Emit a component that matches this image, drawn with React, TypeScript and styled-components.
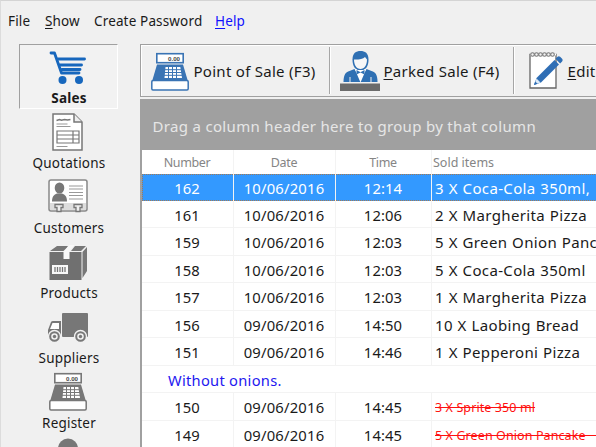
import React from 'react';
import styled, { createGlobalStyle, css } from 'styled-components';

const Global = createGlobalStyle`
  html, body { margin: 0; padding: 0; }
  body {
    overflow: hidden;
    background: #f0f0f0;
    color: #1a1a1a;
    font-family: 'Noto Sans', 'Open Sans', sans-serif;
  }
  svg { display: block; }
`;

const Window = styled.div`
  box-sizing: border-box;
  width: 596px;
  height: 447px;
  overflow: hidden;
  display: flex;
  flex-direction: column;
  border-top: 1px solid #d4d4d4;
  border-left: 1px solid #dcdcdc;
  background: #f0f0f0;
`;

const MenuBar = styled.nav`
  height: 42px;
  flex: none;
  display: flex;
  padding-left: 7px;
`;

const MenuItem = styled.span<{ $width: number; $link?: boolean }>`
  width: ${p => p.$width}px;
  flex: none;
  font-size: 13.5px;
  line-height: 40px;
  white-space: nowrap;
  letter-spacing: 0.15px;
  color: ${p => (p.$link ? '#1010ff' : '#1a1a1a')};
`;

const Mnemonic = styled.span`
  text-decoration: underline;
  text-decoration-thickness: 1px;
  text-underline-offset: 2px;
`;

const Body = styled.div`
  flex: 1;
  min-height: 0;
  display: flex;
`;

const Sidebar = styled.aside`
  width: 121px;
  flex: none;
  padding: 1px 0 0 18px;
  box-sizing: border-box;
`;

const NavItem = styled.div<{ $active?: boolean }>`
  box-sizing: border-box;
  width: 99px;
  height: 65px;
  display: flex;
  flex-direction: column;
  align-items: center;
  border: 1px solid transparent;
  ${p => p.$active && css`
    border-color: #a0a0a0 #fff #fff #a0a0a0;
    background: #f2f2f2;
    font-weight: 700;
  `}
`;

const NavIcon = styled.div`
  width: 42px;
  height: 44px;
  margin: -1px 1px 0 0;
`;

const NavLabel = styled.span`
  font-size: 13.5px;
  line-height: 20px;
  letter-spacing: 0.2px;
  white-space: nowrap;
  padding-left: 1px;
`;

const Main = styled.main`
  flex: 1;
  min-width: 0;
  padding: 1px 0 0 18px;
  display: flex;
  flex-direction: column;
`;

const Toolbar = styled.div`
  box-sizing: border-box;
  height: 53px;
  flex: none;
  display: flex;
  align-items: center;
  border: 1px solid #a0a0a0;
  border-right: 0;
  box-shadow: inset 1px 1px 0 #fff;
  margin-bottom: 2px;
  overflow: hidden;
`;

const ToolButton = styled.div<{ $width: number }>`
  width: ${p => p.$width}px;
  height: 51px;
  flex: none;
  display: flex;
  align-items: center;
`;

const ToolIcon = styled.div<{ $inset: number }>`
  box-sizing: border-box;
  width: 52.5px;
  flex: none;
  padding-left: ${p => p.$inset}px;
`;

const ToolLabel = styled.span`
  font-size: 15px;
  letter-spacing: 0.28px;
  white-space: nowrap;
  padding-top: 1px;
`;

const Divider = styled.div`
  width: 1px;
  height: 47px;
  flex: none;
  background: #a6a6a6;
  border-right: 1px solid #fff;
`;

const GridPanel = styled.section`
  box-sizing: border-box;
  flex: 1;
  min-height: 0;
  border-left: 2px solid #a0a0a0;
  background: #fff;
  overflow: hidden;
`;

const GroupBar = styled.div`
  height: 51px;
  box-sizing: border-box;
  padding: 4px 0 0 10.5px;
  line-height: 46px;
  background: #a0a0a0;
  color: #e6e6e6;
  font-size: 15px;
  letter-spacing: 0.32px;
  white-space: nowrap;
`;

const columns = css`
  display: grid;
  grid-template-columns: 92px 102px 96px 1fr;
`;

const HeaderRow = styled.div`
  ${columns}
  height: 24px;
  font-size: 12.5px;
  line-height: 26px;
  color: #858585;
`;

const HeaderCell = styled.div<{ $left?: boolean }>`
  box-sizing: border-box;
  text-align: ${p => (p.$left ? 'left' : 'center')};
  letter-spacing: ${p => (p.$left ? 0 : -0.35)}px;
  border-right: 1px solid ${p => (p.$left ? 'transparent' : '#f3f3f3')};
  white-space: nowrap;
  padding-left: ${p => (p.$left ? 1 : 0)}px;
  padding-right: ${p => (p.$left ? 0 : 1)}px;
`;

const dots = 'repeating-linear-gradient(90deg, #a07a58 0 1px, #3f97ee 1px 2px)';
const dotsDown = 'repeating-linear-gradient(180deg, #a07a58 0 1px, #3f97ee 1px 2px)';

const Row = styled.div<{ $selected?: boolean }>`
  ${columns}
  box-sizing: border-box;
  height: 27.5px;
  font-size: 14.8px;
  line-height: 28.5px;
  border-bottom: 1px solid #f3f3f3;
  ${p => p.$selected && css`
    height: 27px;
    margin-bottom: -0.5px;
    background:
      ${dots} top / 100% 1px no-repeat,
      ${dots} bottom / 100% 1px no-repeat,
      ${dotsDown} left / 1px 100% no-repeat,
      #3399ff;
    color: #fff;
    line-height: 28px;
    border-bottom: 0;
  `}
`;

const Cell = styled.div<{ $spacing?: number }>`
  box-sizing: border-box;
  text-align: center;
  border-right: 1px solid #f3f3f3;
  letter-spacing: ${p => p.$spacing ?? 0}px;
  padding-right: 1px;
  white-space: nowrap;
  overflow: hidden;
`;

const ItemCell = styled.div<{ $void?: boolean }>`
  padding-left: 3px;
  font-size: 15px;
  letter-spacing: 0.35px;
  word-spacing: 0.5px;
  white-space: pre;
  overflow: hidden;
  ${p => p.$void && css`
    font-size: 12.5px;
    letter-spacing: 0.1px;
    word-spacing: 0;
    line-height: 30px;
    color: #ff1010;
    text-decoration: line-through;
    text-decoration-thickness: 1px;
  `}
`;

const Note = styled.div`
  box-sizing: border-box;
  height: 27.5px;
  padding-left: 26px;
  line-height: 28px;
  font-size: 14.7px;
  letter-spacing: 0.27px;
  color: #2418f0;
  border-bottom: 1px solid #f3f3f3;
`;

const CartIcon = () => (
  <svg width="42" height="44" viewBox="0 0 42 44" fill="none" stroke="#1767bd" strokeLinecap="round" strokeLinejoin="round">
    <path d="M4 9h3.500L14.500 29H32" strokeWidth="2.8" />
    <path d="M11 15h26.500M13 21h21.500M15 25.500h18" strokeWidth="2.900" />
    <circle cx="15.500" cy="36" r="4" fill="#1767bd" stroke="none" />
    <circle cx="32" cy="36" r="4" fill="#1767bd" stroke="none" />
  </svg>
);

const QuoteIcon = () => (
  <svg width="42" height="44" viewBox="0 0 42 44" fill="none" stroke="#777">
    <path d="M6 5h21l8 8v28H6z" fill="#fff" strokeWidth="1.5" />
    <path d="M27 5v8h8" fill="#eee" strokeWidth="1.5" />
    <path d="M9.500 11.500l3-1 2 .8 3-.8 3 .6 3-.6" strokeWidth="1.5" />
    <path d="M9.500 15h11M9.500 17.500h14" strokeWidth="1" stroke="#999" />
    <path d="M10 22h22v12H10zM10 26h22M10 30h22M26 22v12" strokeWidth="1.2" />
    <path d="M9.500 37.500h11" stroke="#999" />
  </svg>
);

const CustomerIcon = () => (
  <svg width="42" height="44" viewBox="0 0 42 44">
    <rect x="2" y="6" width="38" height="31" rx="2" fill="#fff" stroke="#888" strokeWidth="1.5" />
    <path d="M3 29h36v7H3z" fill="#ddd" />
    <ellipse cx="12.500" cy="14" rx="4.800" ry="5.500" fill="#777" />
    <path d="M5 27.500c0-5 2-7 5-8h5c3 1 5 3 5 8z" fill="#777" />
    <path d="M22 12h14M22 15h14M22 18.500h14M22 21.500h14M22 25h14" stroke="#999" />
    <g fill="#f0f0f0" stroke="#777" strokeWidth="1.3">
      <path d="M8 30.500h8v3h-2v4h-4v-4H8zM27 30.500h8v3h-2v4h-4v-4h-2z" />
    </g>
  </svg>
);

const BoxIcon = () => (
  <svg width="42" height="44" viewBox="0 0 42 44">
    <path d="M3 12l7-5h11l-3 5zM24 12l4-5h11l-5 5zM35.500 13l4.500-5v24l-4.500 7z" fill="#777" />
    <path d="M2.500 13h32v28h-32z" fill="#707070" />
    <path d="M16.500 12l6-6h5l-5 6v8h-6z" fill="#f8f8f8" />
    <rect x="5" y="26" width="16" height="9" fill="#f8f8f8" />
    <path d="M8 28v5M10.500 28v5M13 28v5M15.500 28v5M18 28v5" stroke="#777" strokeWidth="1.3" />
  </svg>
);

const TruckIcon = () => (
  <svg width="42" height="44" viewBox="0 0 42 44">
    <rect x="15" y="9" width="26" height="24" rx="1" fill="#777" />
    <path d="M1 32v-6l3-8q.5-1 2-1h8v16H1z" fill="#777" />
    <path d="M3 25l2.500-6H12v6z" fill="#fff" />
    <g fill="#eee" stroke="#f0f0f0" strokeWidth="1.300">
      <circle cx="7.500" cy="32.500" r="6" />
      <circle cx="33.500" cy="32.500" r="6" />
    </g>
    <g fill="#f0f0f0" stroke="#777" strokeWidth="2">
      <circle cx="7.500" cy="32.500" r="4.300" />
      <circle cx="33.500" cy="32.500" r="4.300" />
    </g>
    <circle cx="7.500" cy="32.500" r="1.700" fill="#777" />
    <circle cx="33.500" cy="32.500" r="1.700" fill="#777" />
  </svg>
);

const RegisterGlyph = ({ color }: { color: string }) => (
  <svg width="42" height="44" viewBox="0 0 42 44">
    <rect x="7.800" y="4.700" width="26.400" height="9" fill="#fff" stroke={color} strokeWidth="1.600" />
    <text x="25" y="11.600" textAnchor="middle" fontSize="6.200" fontWeight="700" fontFamily="'Liberation Sans', sans-serif" fill="#444">0.00</text>
    <path d="M8 15.500h26l5 17H3z" fill={color} />
    <rect x="2.800" y="31.500" width="36.400" height="9.500" rx="1.200" fill="#fff" stroke={color} strokeWidth="1.500" />
    <path d="M16.500 18h14.800l1.700 11H15.500z" fill="#fff" />
    <path d="M15 20.700h17M15 23.500h18M15 26.300h18M19.500 17v13M23.500 17v13M27.500 17v13" stroke={color} strokeWidth="1" fill="none" />
  </svg>
);

const PersonIcon = () => (
  <svg width="42" height="44" viewBox="0 0 42 44">
    <circle cx="21" cy="14.500" r="10" fill="#777" />
  </svg>
);

const WaiterIcon = () => (
  <svg width="42" height="44" viewBox="0 0 42 44">
    <path d="M13.500 10.500c0-6.500 3.500-8.500 8-8.500s8 2 8 8.500c0 7-3 11-8 11s-8-4-8-11z" fill="#2f70b3" />
    <path d="M15 10.500c4 .3 9-.5 11-2.500l2 2.500c0 5.500-2.500 9.500-6.500 9.500S15 16 15 10.500z" fill="#f7f7f7" />
    <path d="M4.500 33c0-7 2-10 6-11l5-2 6 9 6-9 5 2c4 1 6 4 6 11z" fill="#2f70b3" />
    <path d="M15.500 19.500l6 14 6-14-3 1.500h-6z" fill="#fff" />
    <path d="M17.500 21l4 2.200 4-2.200v4.500l-4-2-4 2z" fill="#2f70b3" />
    <path d="M11 28v5M32 28v5" stroke="#f0f0f0" />
    <rect x="1" y="34.500" width="40" height="7.500" fill="#6b6b6b" />
  </svg>
);

const NotepadIcon = () => (
  <svg width="42" height="44" viewBox="0 0 42 44">
    <path d="M5 5.500h26V39H5z" fill="#fff" stroke="#666" strokeWidth="1.300" />
    <path d="M5 5.500h26" stroke="#fff" strokeWidth="2" />
    <g fill="#f3f3f3" stroke="#777" strokeWidth="1.100">
      {[7.5, 11.5, 15.5, 19.5, 23.5, 27.5].map(x => <circle key={x} cx={x} cy="5.500" r="1.800" />)}
    </g>
    <path d="M9 36l2.500-7L29.500 11l4.500 4.500L16 33.500z" fill="#2f6eb5" />
    <path d="M30.500 9.800l2-2q1.300-1.300 2.600 0l2 2q1.300 1.300 0 2.600l-2 2z" fill="#2f6eb5" />
    <path d="M11.500 29.500l4 4-4.500 1.500-1-1z" fill="#dceaf7" />
    <path d="M9 36l1.200-3.500 2.300 2.300z" fill="#2f6eb5" />
  </svg>
);

const navItems = [
  { label: 'Sales', icon: <CartIcon /> },
  { label: 'Quotations', icon: <QuoteIcon /> },
  { label: 'Customers', icon: <CustomerIcon /> },
  { label: 'Products', icon: <BoxIcon /> },
  { label: 'Suppliers', icon: <TruckIcon /> },
  { label: 'Register', icon: <RegisterGlyph color="#777" /> },
  { label: '', icon: <PersonIcon /> },
];

type Sale = { id: number; date: string; time: string; items: string; note?: string; voided?: boolean };

const sales: Sale[] = [
  { id: 162, date: '10/06/2016', time: '12:14', items: '3 X Coca-Cola 350ml,' },
  { id: 161, date: '10/06/2016', time: '12:06', items: '2 X Margherita Pizza' },
  { id: 159, date: '10/06/2016', time: '12:03', items: '5 X Green Onion Pancake' },
  { id: 158, date: '10/06/2016', time: '12:03', items: '5 X Coca-Cola 350ml' },
  { id: 157, date: '10/06/2016', time: '12:03', items: '1 X Margherita Pizza' },
  { id: 156, date: '09/06/2016', time: '14:50', items: '10 X Laobing Bread' },
  { id: 151, date: '09/06/2016', time: '14:46', items: '1 X Pepperoni Pizza', note: 'Without onions.' },
  { id: 150, date: '09/06/2016', time: '14:45', items: '3 X Sprite 350 ml', voided: true },
  { id: 149, date: '09/06/2016', time: '14:45', items: '5 X Green Onion Pancake      ', voided: true },
];

export default function App() {
  return (
    <>
      <Global />
      <Window>
        <MenuBar>
          <MenuItem $width={37}>File</MenuItem>
          <MenuItem $width={49}><Mnemonic>S</Mnemonic>how</MenuItem>
          <MenuItem $width={121}>Create Password</MenuItem>
          <MenuItem $width={40} $link><Mnemonic>H</Mnemonic>elp</MenuItem>
        </MenuBar>
        <Body>
          <Sidebar>
            {navItems.map((item, i) => (
              <NavItem key={i} $active={i === 0}>
                <NavIcon>{item.icon}</NavIcon>
                <NavLabel>{item.label}</NavLabel>
              </NavItem>
            ))}
          </Sidebar>
          <Main>
            <Toolbar>
              <ToolButton $width={188}>
                <ToolIcon $inset={8}><RegisterGlyph color="#3a74b4" /></ToolIcon>
                <ToolLabel>Point of Sale (F3)</ToolLabel>
              </ToolButton>
              <Divider />
              <ToolButton $width={182}>
                <ToolIcon $inset={8}><WaiterIcon /></ToolIcon>
                <ToolLabel><Mnemonic>P</Mnemonic>arked Sale (F4)</ToolLabel>
              </ToolButton>
              <Divider />
              <ToolButton $width={182}>
                <ToolIcon $inset={10}><NotepadIcon /></ToolIcon>
                <ToolLabel><Mnemonic>E</Mnemonic>dit</ToolLabel>
              </ToolButton>
            </Toolbar>
            <GridPanel>
              <GroupBar>Drag a column header here to group by that column</GroupBar>
              <HeaderRow>
                <HeaderCell>Number</HeaderCell>
                <HeaderCell>Date</HeaderCell>
                <HeaderCell>Time</HeaderCell>
                <HeaderCell $left>Sold items</HeaderCell>
              </HeaderRow>
              {sales.map((sale, i) => (
                <React.Fragment key={sale.id}>
                  <Row $selected={i === 0}>
                    <Cell>{sale.id}</Cell>
                    <Cell $spacing={0.2}>{sale.date}</Cell>
                    <Cell $spacing={0.1}>{sale.time}</Cell>
                    <ItemCell $void={sale.voided}>{sale.items}</ItemCell>
                  </Row>
                  {sale.note && <Note>{sale.note}</Note>}
                </React.Fragment>
              ))}
            </GridPanel>
          </Main>
        </Body>
      </Window>
    </>
  );
}
